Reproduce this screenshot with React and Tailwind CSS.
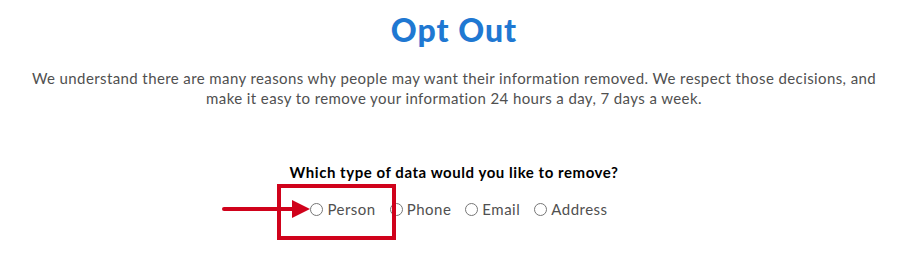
export default function App() {
  const options = ["Person", "Phone", "Email", "Address"];
  return (
    <div className="w-[908px] h-[279px] bg-white flex flex-col items-center" style={{ fontFamily: "Lato, 'Open Sans', sans-serif" }}>
      <h1 className="mt-[11px] text-[32px] leading-[38px] font-black text-[#1f78d2] tracking-[1px]">Opt Out</h1>
      <p className="mt-[19px] w-[880px] text-center text-[15px] leading-[20px] text-[#505050] tracking-[0.4px]">
        We understand there are many reasons why people may want their information removed. We respect those decisions, and
        make it easy to remove your information 24 hours a day, 7 days a week.
      </p>
      <p className="mt-[54px] text-[15px] leading-[20px] font-bold text-black tracking-[0.55px]">Which type of data would you like to remove?</p>
      <div className="relative mt-[17px] ml-[10px] flex items-center gap-[14px] text-[15px] leading-[20px] text-[#505050] tracking-[0.5px]">
        <div className="absolute left-[-88px] top-1/2 -translate-y-1/2 flex items-center">
          <div className="w-[70px] h-[4px] bg-[#d0021b] rounded-l-full"></div>
          <div className="w-0 h-0 border-y-[9px] border-y-transparent border-l-[18px] border-l-[#d0021b]"></div>
        </div>
        <div className="absolute left-[-33px] top-[-15px] w-[119px] h-[56px] border-[4px] border-[#d0021b]"></div>
        {options.map((o) => (
          <label key={o} className="flex items-center gap-[4px]">
            <span className="w-[13px] h-[13px] rounded-full border border-[#767676] bg-white"></span>
            <span>{o}</span>
          </label>
        ))}
      </div>
    </div>
  );
}
